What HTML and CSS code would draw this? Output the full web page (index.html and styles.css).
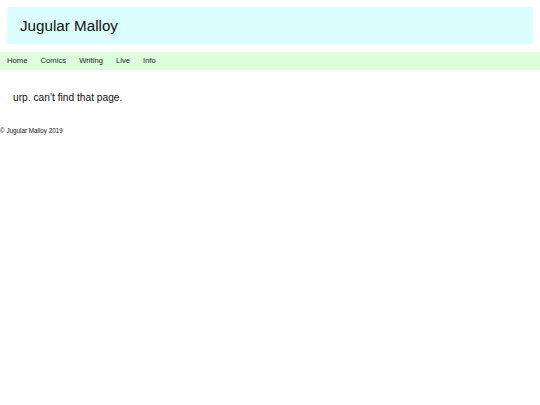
FILE: index.html
```html
<!DOCTYPE html>
<html>
<head>
<meta charset="utf-8">
<title>Jugular Malloy</title>
<link rel="stylesheet" href="styles.css">
</head>
<body>
<header class="masthead">
  <h1 class="site-title">Jugular Malloy</h1>
</header>
<nav class="nav">
  <a href="#">Home</a>
  <a href="#">Comics</a>
  <a href="#">Writing</a>
  <a href="#">Live</a>
  <a href="#">Info</a>
</nav>
<main class="content">
  <p>urp. can’t find that page.</p>
</main>
<footer class="footer">© Jugular Malloy 2019</footer>
</body>
</html>
```
FILE: styles.css
```css
html, body {
  margin: 0;
  padding: 0;
  background: #ffffff;
}
body {
  font-family: "Liberation Sans", Arial, sans-serif;
  color: #111111;
}
.masthead {
  margin: 7px 7px 0 7px;
  height: 37px;
  background: #dbffff;
  display: flex;
  align-items: center;
  padding-left: 13px;
}
.site-title {
  margin: 0;
  font-size: 15.2px;
  font-weight: normal;
  line-height: 1;
}
.nav {
  margin-top: 8px;
  height: 17.5px;
  background: #ddffdd;
  display: flex;
  align-items: center;
  gap: 13px;
  padding-left: 7px;
}
.nav a {
  font-size: 7.7px;
  color: #222222;
  text-decoration: none;
  line-height: 1;
}
.content {
  padding-left: 13px;
  padding-top: 21px;
}
.content p {
  margin: 0;
  font-size: 10.2px;
  line-height: 14px;
}
.footer {
  margin-top: 22px;
  font-size: 6.3px;
  line-height: 8px;
}
```
